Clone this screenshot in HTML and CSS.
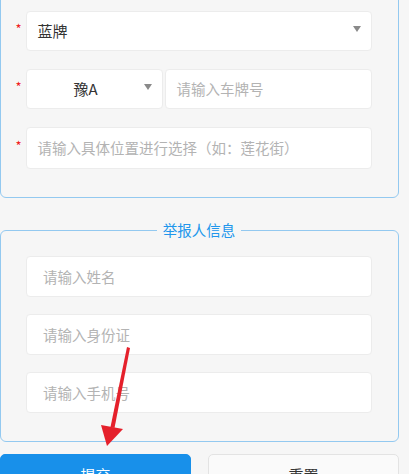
FILE: index.html
```html
<!DOCTYPE html>
<html lang="zh-CN">
<head>
<meta charset="utf-8">
<title>举报</title>
<link rel="stylesheet" href="styles.css">
</head>
<body>
<div class="page">
  <section class="box box-top">
    <div class="row">
      <span class="req">*</span>
      <div class="field select wide">
        <span class="value">蓝牌</span>
        <span class="caret"></span>
      </div>
    </div>
    <div class="row">
      <span class="req">*</span>
      <div class="field select short">
        <span class="value center">豫A</span>
        <span class="caret"></span>
      </div>
      <div class="field input grow">
        <span class="ph">请输入车牌号</span>
      </div>
    </div>
    <div class="row">
      <span class="req">*</span>
      <div class="field input grow tall">
        <span class="ph">请输入具体位置进行选择（如：莲花街）</span>
      </div>
    </div>
  </section>

  <fieldset class="box box-person">
    <legend class="legend">举报人信息</legend>
    <div class="field input plain"><span class="ph">请输入姓名</span></div>
    <div class="field input plain"><span class="ph">请输入身份证</span></div>
    <div class="field input plain"><span class="ph">请输入手机号</span></div>
  </fieldset>

  <div class="actions">
    <button class="btn primary">提交</button>
    <button class="btn ghost">重置</button>
  </div>
</div>

<svg class="arrow" width="409" height="474" viewBox="0 0 409 474">
  <polygon points="127,347 130,348 114.5,428 110.5,427" fill="#e5202b"/>
  <polygon points="101,425 123,429 107,446" fill="#e5202b"/>
</svg>
</body>
</html>
```

FILE: styles.css
```css
html, body {
  margin: 0;
  padding: 0;
}

body {
  background: #f6f6f6;
  font-family: "Noto Sans CJK SC", "Noto Sans", sans-serif;
  color: #333;
}

.page {
  width: 409px;
  height: 474px;
  overflow: hidden;
  display: flow-root;
}

.box {
  margin: 0 10px 0 0;
  border: 1.5px solid #93c9f0;
  border-radius: 6px;
  background: #f6f6f6;
  box-sizing: border-box;
}

.box-top {
  margin-top: -10px;
  padding: 19.5px 26px 28.5px 0;
  display: flex;
  flex-direction: column;
  gap: 18px;
}

.row {
  display: flex;
  align-items: center;
  gap: 2px;
}

.req {
  width: 22.5px;
  flex: none;
  color: #f01e1e;
  font-size: 13px;
  text-align: right;
  padding-right: 2px;
  box-sizing: border-box;
  margin-top: -4px;
}

.field {
  height: 41px;
  background: #fff;
  border: 1px solid #ececec;
  border-radius: 4px;
  box-sizing: border-box;
  display: flex;
  align-items: center;
  font-size: 14.5px;
  position: relative;
}

.box-top .field {
  height: 40px;
}

.box-top .field.tall {
  height: 42px;
}

.select.wide {
  flex: 1;
  padding-left: 11px;
}

.select.short {
  width: 137px;
  flex: none;
}

.value {
  color: #333;
  font-size: 15px;
}

.value.center {
  width: 118px;
  text-align: center;
}

.caret {
  position: absolute;
  right: 10px;
  top: 14px;
  width: 0;
  height: 0;
  border-left: 4.5px solid transparent;
  border-right: 4.5px solid transparent;
  border-top: 6px solid #8a8a8a;
}

.input.grow {
  flex: 1;
  padding-left: 11px;
}

.ph {
  color: #b3b3b3;
  white-space: nowrap;
}

.box-person {
  margin-top: 22px;
  padding: 16px 26px 28px 25px;
  min-width: 0;
  display: flex;
  flex-direction: column;
  gap: 17px;
}

.legend {
  margin: 0 auto;
  padding: 0 6px;
  color: #2196ec;
  font-size: 14.5px;
  line-height: 20px;
}

.input.plain {
  padding-left: 16px;
}

.actions {
  display: flex;
  gap: 17px;
  margin: 12px 10px 0 0;
}

.btn {
  flex: 1;
  height: 40px;
  border-radius: 5px;
  font-family: "Noto Sans CJK SC", "Noto Sans", sans-serif;
  font-size: 15px;
}

.primary {
  background: #1890ea;
  border: 1px solid #1890ea;
  color: #fff;
}

.ghost {
  background: #fafafa;
  border: 1px solid #e3e3e3;
  color: #333;
}

.arrow {
  position: absolute;
  top: 0;
  left: 0;
  pointer-events: none;
}
```
